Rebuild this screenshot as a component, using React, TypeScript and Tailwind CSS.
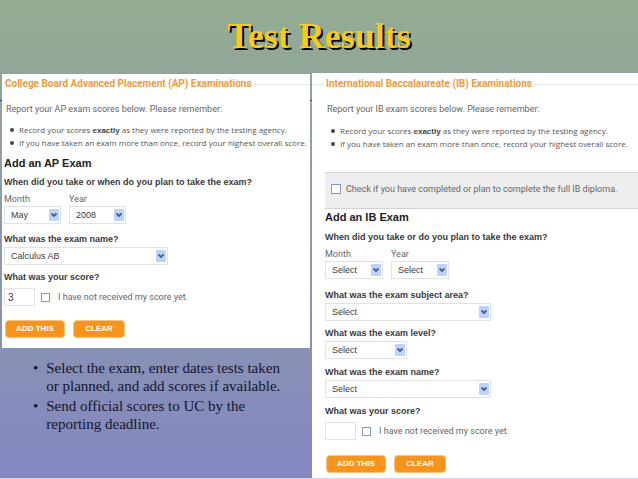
import React from "react";

type PickerProps = { id: string; label: string; options: string[]; width: string };

const Picker: React.FC<PickerProps> = ({ id, label, options, width }) => (
  <div className={`relative h-[18px] ${width}`}>
    <select
      id={id}
      aria-label={label}
      className="block h-full w-full appearance-none border border-[#e2e2e2] bg-white pl-[6px] font-['Liberation_Sans',Arial,sans-serif] text-[9px] leading-4 text-[#3c3c3c]"
    >
      {options.map((item) => (
        <option key={item}>{item}</option>
      ))}
    </select>
    <span className="pointer-events-none absolute top-[3px] right-[2px] flex h-3 w-[10px] items-center justify-center rounded-[1px] bg-[#bfd2fa]">
      <svg viewBox="0 0 8 8" className="h-2 w-2" fill="none" stroke="#42608f" strokeWidth="1.8">
        <path d="M1.5 2.5 4 5 6.5 2.5" />
      </svg>
    </span>
  </div>
);

const Heading: React.FC<{ children: React.ReactNode; lead?: boolean }> = ({ children, lead }) => (
  <div className="flex items-center">
    {lead && <span className="h-px w-3 bg-[#e3eaf0]" />}
    <h2 className={`text-[10px] leading-[14px] font-bold text-[#ee9a3a] ${lead ? "px-[2px]" : "pl-[3px] pr-[2px]"}`}>
      {children}
    </h2>
    <span className="h-px flex-1 bg-[#e3eaf0]" />
  </div>
);

const Rules: React.FC = () => (
  <>
    {["exactly", ""].map((strong) => (
      <li key={strong} className="flex items-center gap-[5px]">
        <span className="h-1 w-1 shrink-0 rounded-full bg-[#444]" />
        {strong ? (
          <span>
            Record your scores <b className="font-['Liberation_Sans',Arial,sans-serif] leading-none text-[#444]">{strong}</b> as they were reported by the testing agency.
          </span>
        ) : (
          <span>If you have taken an exam more than once, record your highest overall score.</span>
        )}
      </li>
    ))}
  </>
);

const Score: React.FC<{ id: string; value: string }> = ({ id, value }) => (
  <div className="mt-[5px] flex items-start">
    <input
      id={id}
      type="text"
      defaultValue={value}
      className="h-[18px] w-[31px] border border-[#e2e2e2] bg-white pl-[3px] font-['Liberation_Sans',Arial,sans-serif] text-[10px] text-[#3c3c3c]"
    />
    <label className="ml-[6px] flex items-center gap-2 pt-[3px] leading-3">
      <input type="checkbox" className="h-[9px] w-[9px] shrink-0 appearance-none border border-[#7f9db9] bg-white" />
      I have not received my score yet.
    </label>
  </div>
);

const Buttons: React.FC = () => (
  <div className="flex gap-2 pl-px font-['Liberation_Sans',Arial,sans-serif] text-[8px] font-bold text-white">
    <button type="button" className="h-[18px] w-[60px] rounded-[4px] border border-[#fbc378] bg-[#f7941d]">
      ADD THIS
    </button>
    <button type="button" className="h-[18px] w-[52px] rounded-[4px] border border-[#fbc378] bg-[#f7941d]">
      CLEAR
    </button>
  </div>
);

const question = "block font-['Liberation_Sans',Arial,sans-serif] text-[9px] font-bold leading-3 text-[#3a3a3a]";
const title = "font-['Liberation_Sans',Arial,sans-serif] text-[11px] leading-4 font-bold text-[#222]";

const App: React.FC = () => {
  return (
    <div className="relative min-h-screen border-b border-[#d5d6ea] bg-linear-to-b from-[#94ac90] to-[#8486c1] font-['Roboto',sans-serif]">
      <div className="absolute inset-x-0 top-[100px] h-px bg-[#33339c]" />

      <h1 className="h-[73px] pt-[18px] text-center font-['Liberation_Serif',serif] text-[36px] leading-9 font-bold text-[#f5cb1f] [text-shadow:2px_2px_0_#000]">
        Test Results
      </h1>

      <main className="relative grid grid-cols-[311fr_327fr] text-[9px] leading-3 whitespace-nowrap text-[#666]">
        <div className="min-w-0">
          {/* AP exams */}
          <form className="mt-px mr-px ml-[2px] bg-white pt-[3px] pb-[10px]">
            <Heading>College Board Advanced Placement (AP) Examinations</Heading>
            <p className="mt-3 pl-1">Report your AP exam scores below. Please remember:</p>
            <ul className="mt-2 pl-2 font-['Open_Sans',sans-serif] text-[8px] leading-[13px] text-[#555]">
              <Rules />
            </ul>
            <div className="px-[2px]">
              <h3 className={`mt-[6px] ${title}`}>Add an AP Exam</h3>
              <p className={`mt-[5px] ${question}`}>When did you take or when do you plan to take the exam?</p>
              <div className="mt-[5px] flex gap-2">
                <div>
                  <label htmlFor="ap-month" className="mb-px block">Month</label>
                  <Picker id="ap-month" label="Month" options={["May", "June"]} width="w-[57px]" />
                </div>
                <div>
                  <label htmlFor="ap-year" className="mb-px block">Year</label>
                  <Picker id="ap-year" label="Year" options={["2008", "2009"]} width="w-[57px]" />
                </div>
              </div>
              <label htmlFor="ap-name" className={`mt-[9px] mb-[2px] ${question}`}>What was the exam name?</label>
              <Picker id="ap-name" label="What was the exam name?" options={["Calculus AB", "Calculus BC"]} width="w-[164px]" />
              <label htmlFor="ap-score" className={`mt-[6px] ${question}`}>What was your score?</label>
              <Score id="ap-score" value="3" />
              <div className="mt-[14px]">
                <Buttons />
              </div>
            </div>
          </form>

          {/* Notes */}
          <ul className="pt-[11px] pl-[33px] font-['Liberation_Serif',serif] text-[15px] leading-[18px] text-[#14142c]">
            <li className="flex gap-2">
              <span>•</span>
              <span>Select the exam, enter dates tests taken<br />or planned, and add scores if available.</span>
            </li>
            <li className="mt-[2px] flex gap-2">
              <span>•</span>
              <span>Send official scores to UC by the<br />reporting deadline.</span>
            </li>
          </ul>
        </div>

        {/* IB exams */}
        <form className="ml-px min-w-0 bg-white pt-1 pb-[5px]">
          <Heading lead>International Baccalaureate (IB) Examinations</Heading>
          <p className="mt-3 pl-[15px]">Report your IB exam scores below. Please remember:</p>
          <ul className="mt-[9px] pl-[19px] font-['Open_Sans',sans-serif] text-[8px] leading-[13px] text-[#555]">
            <Rules />
          </ul>
          <div className="pl-[13px]">
            <label className="mt-[22px] flex h-[37px] items-center gap-[5px] border-y border-[#d2d2d2] bg-[#eee] pb-1 pl-[6px]">
              <input type="checkbox" className="h-[10px] w-[10px] shrink-0 appearance-none border border-[#7f9db9] bg-white" />
              Check if you have completed or plan to complete the full IB diploma.
            </label>
            <h3 className={title}>Add an IB Exam</h3>
            <p className={`mt-[6px] ${question}`}>When did you take or do you plan to take the exam?</p>
            <div className="mt-[5px] flex gap-2">
              <div>
                <label htmlFor="ib-month" className="mb-px block">Month</label>
                <Picker id="ib-month" label="Month" options={["Select", "May"]} width="w-[58px]" />
              </div>
              <div>
                <label htmlFor="ib-year" className="mb-px block">Year</label>
                <Picker id="ib-year" label="Year" options={["Select", "2008"]} width="w-[58px]" />
              </div>
            </div>
            <label htmlFor="ib-area" className={`mt-[10px] mb-[2px] ${question}`}>What was the exam subject area?</label>
            <Picker id="ib-area" label="What was the exam subject area?" options={["Select"]} width="w-[166px]" />
            <label htmlFor="ib-level" className={`mt-[6px] mb-[2px] ${question}`}>What was the exam level?</label>
            <Picker id="ib-level" label="What was the exam level?" options={["Select"]} width="w-[82px]" />
            <label htmlFor="ib-name" className={`mt-[7px] mb-[2px] ${question}`}>What was the exam name?</label>
            <Picker id="ib-name" label="What was the exam name?" options={["Select"]} width="w-[166px]" />
            <label htmlFor="ib-score" className={`mt-[7px] ${question}`}>What was your score?</label>
            <Score id="ib-score" value="" />
            <div className="mt-[15px]">
              <Buttons />
            </div>
          </div>
        </form>
      </main>
    </div>
  );
};

export default App;
